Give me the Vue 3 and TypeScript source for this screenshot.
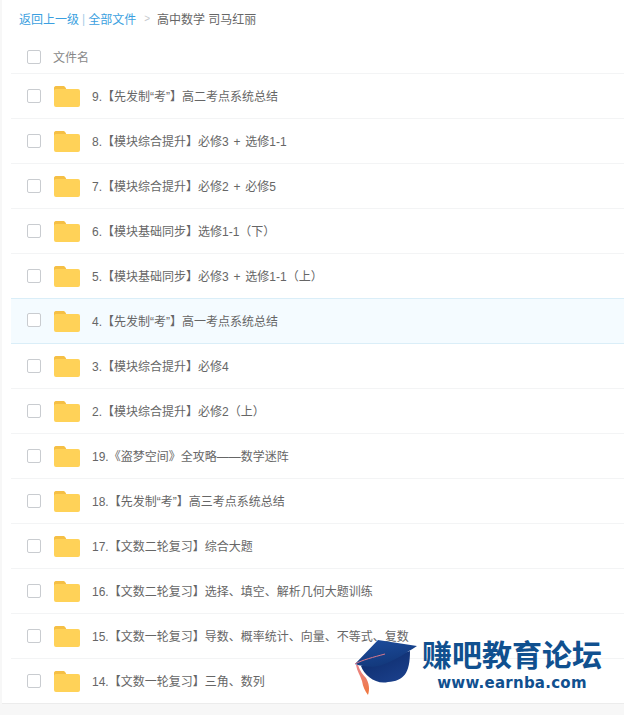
<script setup lang="ts">
const files: string[] = [
  '9.【先发制“考”】高二考点系统总结',
  '8.【模块综合提升】必修3 + 选修1-1',
  '7.【模块综合提升】必修2 + 必修5',
  '6.【模块基础同步】选修1-1（下）',
  '5.【模块基础同步】必修3 + 选修1-1（上）',
  '4.【先发制“考”】高一考点系统总结',
  '3.【模块综合提升】必修4',
  '2.【模块综合提升】必修2（上）',
  '19.《盗梦空间》全攻略——数学迷阵',
  '18.【先发制“考”】高三考点系统总结',
  '17.【文数二轮复习】综合大题',
  '16.【文数二轮复习】选择、填空、解析几何大题训练',
  '15.【文数一轮复习】导数、概率统计、向量、不等式、复数',
  '14.【文数一轮复习】三角、数列',
]
const hoverIndex = 5
</script>

<template>
  <div class="page">
    <div class="panel">
      <div class="crumbs">
        <a class="link">返回上一级</a>
        <span class="sep">|</span>
        <a class="link">全部文件</a>
        <span class="arrow">&gt;</span>
        <span class="current">高中数学 司马红丽</span>
      </div>
      <div class="head">
        <span class="check"></span>
        <span class="head-name">文件名</span>
      </div>
      <div
        v-for="(name, index) in files"
        :key="name"
        class="row"
        :class="{ hover: index === hoverIndex }"
      >
        <span class="check"></span>
        <svg class="folder" width="26" height="21" viewBox="0 0 26 21">
          <path d="M0 2.5A2.5 2.5 0 0 1 2.5 0h6.2c1.2 0 2 .5 2.6 1.5L12.2 3H24a2 2 0 0 1 2 2v14a2 2 0 0 1-2 2H2a2 2 0 0 1-2-2z" fill="#ffd258" />
          <path d="M0 2.5A2.5 2.5 0 0 1 2.5 0h6.2c1.2 0 2 .5 2.6 1.5L12.2 3H2a2 2 0 0 0-2 1.5z" fill="#f5bf45" />
        </svg>
        <span class="name">{{ name }}</span>
      </div>
    </div>

    <div class="mark">
      <svg class="cap" width="66" height="62" viewBox="0 0 66 62">
        <defs>
          <linearGradient id="board" x1="0.2" y1="0" x2="0.6" y2="1">
            <stop offset="0" stop-color="#1c4c9c" />
            <stop offset="1" stop-color="#123779" />
          </linearGradient>
          <linearGradient id="body" x1="0" y1="0" x2="0.7" y2="1">
            <stop offset="0" stop-color="#0c2a68" />
            <stop offset="1" stop-color="#1a3f8a" />
          </linearGradient>
          <linearGradient id="fringe" x1="0" y1="0" x2="0" y2="1">
            <stop offset="0" stop-color="#e9868c" />
            <stop offset="1" stop-color="#f0763a" />
          </linearGradient>
        </defs>
        <path d="M7 29 C10 38 22 48 34 45 C50 44 56 36 56 14 Z" fill="url(#body)" />
        <path d="M1 27 L24 3 L63 9 C52 16 40 24 28 28 C20 31 10 30 1 27 Z" fill="url(#board)" />
        <path d="M1 27 C8 23 20 20 31 17" fill="none" stroke="#d9788c" stroke-width="1" />
        <path d="M2 28 C3 34 6 38 8 44 C9 50 11 54 14 58 C16 52 15 46 12 41 C9 38 6 34 4 28 Z" fill="url(#fringe)" />
      </svg>
      <div class="mark-text">
        <div class="mark-title">赚吧教育论坛</div>
        <div class="mark-url">www.earnba.com</div>
      </div>
    </div>
  </div>
</template>

<style scoped>
.page {
  position: relative;
  height: 715px;
  overflow: hidden;
  background: #f7f7f7;
  font-family: "Liberation Sans", "Noto Sans CJK SC", sans-serif;
  font-size: 12px;
  color: #666;
}

.panel {
  margin-left: 2px;
  height: 703px;
  padding-left: 9px;
  background: #fff;
  border-bottom: 1px solid #ececec;
  overflow: hidden;
}

.crumbs {
  display: flex;
  align-items: center;
  height: 37px;
  padding-left: 8px;
}

.link {
  color: #3b9fe0;
}

.sep {
  margin: 0 3px;
  color: #a9cde8;
}

.arrow {
  margin: 0 7px 0 8px;
  color: #c4c8cc;
  font-size: 10px;
}

.head {
  display: flex;
  align-items: center;
  height: 33px;
  padding: 3px 0 0 16px;
  border-bottom: 1px solid #f3f4f5;
}

.head-name {
  margin-left: 12px;
  color: #888;
}

.check {
  flex: none;
  width: 12px;
  height: 12px;
  background: #fff;
  border: 1px solid #c9ccd0;
  border-radius: 2px;
}

.row {
  display: flex;
  align-items: center;
  height: 44px;
  padding-left: 16px;
  border-bottom: 1px solid #f3f4f5;
}

.row.hover {
  margin-top: -1px;
  background: #f4fbff;
  border-top: 1px solid #daeef8;
  border-bottom-color: #daeef8;
}

.row.hover .check {
  margin-bottom: 2px;
}

.folder {
  flex: none;
  margin-left: 13px;
}

.name {
  margin-left: 12px;
  padding-bottom: 2px;
  white-space: nowrap;
  word-spacing: 1.5px;
}

.mark {
  position: absolute;
  left: 354px;
  top: 637px;
  display: flex;
  align-items: flex-start;
}

.cap {
  flex: none;
  margin-right: 2px;
}

.mark-text {
  text-align: center;
  color: #10508f;
  font-weight: 700;
}

.mark-title {
  font-family: "Noto Sans CJK SC", sans-serif;
  font-size: 30px;
  line-height: 32px;
  white-space: nowrap;
}

.mark-url {
  margin-top: 4px;
  font-family: "DejaVu Sans", sans-serif;
  font-size: 15px;
  line-height: 20px;
  letter-spacing: 0.25px;
}
</style>

<style>
html,
body {
  margin: 0;
  background: #f7f7f7;
}
</style>
